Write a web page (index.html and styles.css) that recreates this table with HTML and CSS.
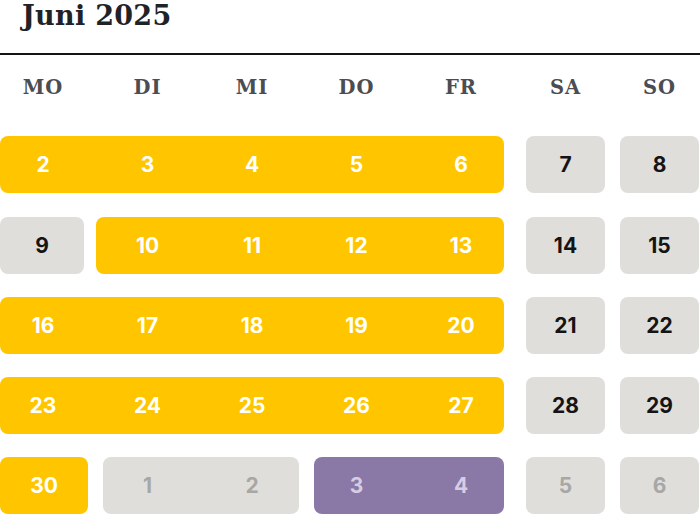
FILE: index.html
```html
<!DOCTYPE html>
<html lang="de">
<head>
<meta charset="utf-8">
<title>Juni 2025</title>
<link rel="stylesheet" href="styles.css">
</head>
<body>
<div class="cal">
  <div class="title-bar"><h1 class="title">Juni 2025</h1></div>
  <div class="grid">
    <div class="wd c-mo">MO</div>
    <div class="wd c-di">DI</div>
    <div class="wd c-mi">MI</div>
    <div class="wd c-do">DO</div>
    <div class="wd c-fr">FR</div>
    <div class="wd c-sa">SA</div>
    <div class="wd c-so">SO</div>

    <div class="block yellow span-mo-fr"><span>2</span><span>3</span><span>4</span><span>5</span><span>6</span></div>
    <div class="block grey c-sa"><span class="one">7</span></div>
    <div class="block grey c-so"><span class="one">8</span></div>

    <div class="block grey c-mo narrow"><span class="one">9</span></div>
    <div class="block yellow span-di-fr shift"><span>10</span><span>11</span><span>12</span><span>13</span></div>
    <div class="block grey c-sa"><span class="one">14</span></div>
    <div class="block grey c-so"><span class="one">15</span></div>

    <div class="block yellow span-mo-fr"><span>16</span><span>17</span><span>18</span><span>19</span><span>20</span></div>
    <div class="block grey c-sa"><span class="one">21</span></div>
    <div class="block grey c-so"><span class="one">22</span></div>

    <div class="block yellow span-mo-fr"><span>23</span><span>24</span><span>25</span><span>26</span><span>27</span></div>
    <div class="block grey c-sa"><span class="one">28</span></div>
    <div class="block grey c-so"><span class="one">29</span></div>

    <div class="block yellow c-mo wide"><span class="one">30</span></div>
    <div class="block grey muted span-di-mi stretch"><span>1</span><span>2</span></div>
    <div class="block purple span-do-fr"><span>3</span><span>4</span></div>
    <div class="block grey muted c-sa"><span class="one">5</span></div>
    <div class="block grey muted c-so"><span class="one">6</span></div>
  </div>
</div>
</body>
</html>
```

FILE: styles.css
```css
* { box-sizing: border-box; }

html, body {
  margin: 0;
  padding: 0;
  background: #ffffff;
}

.cal {
  width: 700px;
  height: 515px;
  overflow: hidden;
}

.title-bar {
  height: 55px;
  border-bottom: 2px solid #141414;
  padding-left: 22px;
  padding-top: 1px;
}

.title {
  margin: 0;
  font-family: "DejaVu Serif", serif;
  font-weight: 700;
  font-size: 27px;
  line-height: 30px;
  letter-spacing: 0.3px;
  color: #1f2328;
}

.grid {
  margin-top: 6px;
  display: grid;
  grid-template-columns: 86px 18.5px 86px 18.5px 86px 18.5px 86px 18.5px 86px 22px 79px 15px 79px;
  grid-template-rows: 51px repeat(5, 57px);
  row-gap: 23.25px;
  padding-top: 1px;
}

.wd {
  display: flex;
  align-items: center;
  justify-content: center;
  font-family: "DejaVu Serif", serif;
  font-weight: 700;
  font-size: 19.5px;
  letter-spacing: 1px;
  color: #4b4d52;
}

.c-mo { grid-column: 1 / 2; }
.c-di { grid-column: 3 / 4; }
.c-mi { grid-column: 5 / 6; }
.c-do { grid-column: 7 / 8; }
.c-fr { grid-column: 9 / 10; }
.c-sa { grid-column: 11 / 12; }
.c-so { grid-column: 13 / 14; }

.span-mo-fr { grid-column: 1 / 10; }
.span-di-fr { grid-column: 3 / 10; }
.span-di-mi { grid-column: 3 / 6; }
.span-do-fr { grid-column: 7 / 10; }

.block {
  border-radius: 8px;
  display: flex;
  align-items: center;
  gap: 18.5px;
  font-family: Inter, "Noto Sans", sans-serif;
  font-weight: 700;
  font-size: 21px;
}

.block span {
  width: 86px;
  flex: none;
  text-align: center;
}

.block .one {
  width: 100%;
}

.shift {
  margin-left: -8.5px;
  padding-left: 8.5px;
}

.narrow {
  margin-right: 2px;
}

.wide {
  margin-right: -2px;
}

.stretch {
  margin-left: -1.5px;
  margin-right: -4px;
  padding-left: 1.5px;
}

.yellow {
  background: #ffc600;
  color: #ffffff;
}

.grey {
  background: #e0deda;
  color: #141414;
}

.grey.muted {
  color: #a7a7a5;
}

.purple {
  background: #8a78a6;
  color: #d6cde2;
}
```
